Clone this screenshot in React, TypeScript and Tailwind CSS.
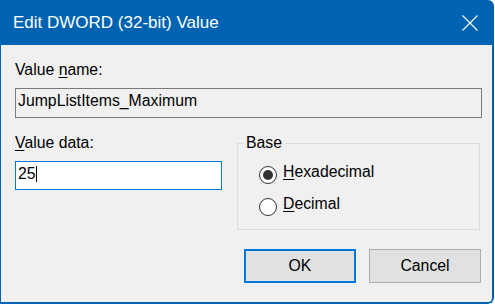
import React from "react";

const font = { fontFamily: '"Liberation Sans", Arial, sans-serif' };

function Radio({ checked, hotkey, rest }: { checked: boolean; hotkey: string; rest: string }) {
  return (
    <div className="flex items-start h-[18px] leading-[18px]">
      <span className="mt-[3px] w-[18px] h-[18px] rounded-full border border-[#333333] bg-white flex items-center justify-center shrink-0">
        {checked && <span className="w-[10px] h-[10px] rounded-full bg-[#333333]" />}
      </span>
      <span className="ml-[6px] text-black">
        <span className="underline underline-offset-2 decoration-1">{hotkey}</span>
        {rest}
      </span>
    </div>
  );
}

export default function App() {
  return (
    <div className="w-[495px] h-[304px] bg-white" style={font}>
      <div className="w-[494px] h-[304px] flex flex-col rounded-tr-[6px] rounded-br-[6px] overflow-hidden">
        {/* Title bar */}
        <div className="h-[45px] shrink-0 bg-[#0063b1] flex items-center justify-between pl-[13px] pr-[16px]">
          <span className="text-white text-[17px] leading-[20px]">Edit DWORD (32-bit) Value</span>
          <svg width="16" height="16" viewBox="0 0 16 16" className="block">
            <path d="M0.5 0.5 L15.5 15.5 M15.5 0.5 L0.5 15.5" stroke="#ffffff" strokeWidth="1.1" fill="none" />
          </svg>
        </div>

        {/* Body */}
        <div className="flex-1 bg-[#f0f0f0] border-l border-r-2 border-b-2 border-[#0063b1] rounded-br-[6px] pl-[14px] pr-[10px] text-[15.8px] leading-[18px] text-black">
          <div className="mt-[16px]">
            Value <span className="underline underline-offset-2 decoration-1">n</span>ame:
          </div>
          <div className="mt-[9px] h-[30px] border border-[#7a7a7a] bg-[#f0f0f0] pl-[2px] pt-[3px]">
            JumpListItems_Maximum
          </div>

          <div className="mt-[16px] flex">
            <div className="w-[207px] shrink-0">
              <div>
                <span className="underline underline-offset-2 decoration-1">V</span>alue data:
              </div>
              <div className="mt-[9px] h-[29px] border border-[#0078d7] bg-white pl-[2px] pt-[3px] flex items-start">
                <span>25</span>
                <span className="w-px h-[16px] bg-black mt-[1px]" />
              </div>
            </div>

            <fieldset className="ml-[15px] mr-[2px] flex-1 h-[96px] border border-[#dcdcdc]">
              <legend className="ml-[5px] px-[3px] leading-[18px]">Base</legend>
              <div className="pl-[21px]">
                <div className="mt-[11px]">
                  <Radio checked hotkey="H" rest="exadecimal" />
                </div>
                <div className="mt-[14px]">
                  <Radio checked={false} hotkey="D" rest="ecimal" />
                </div>
              </div>
            </fieldset>
          </div>

          <div className="mt-[19px] flex justify-end gap-[13px] pr-[1px]">
            <button className="w-[112px] h-[34px] border-2 border-[#0078d7] bg-[#e1e1e1] text-black flex items-center justify-center">
              OK
            </button>
            <button className="w-[112px] h-[34px] border border-[#adadad] bg-[#e1e1e1] text-black flex items-center justify-center">
              Cancel
            </button>
          </div>
        </div>
      </div>
    </div>
  );
}
